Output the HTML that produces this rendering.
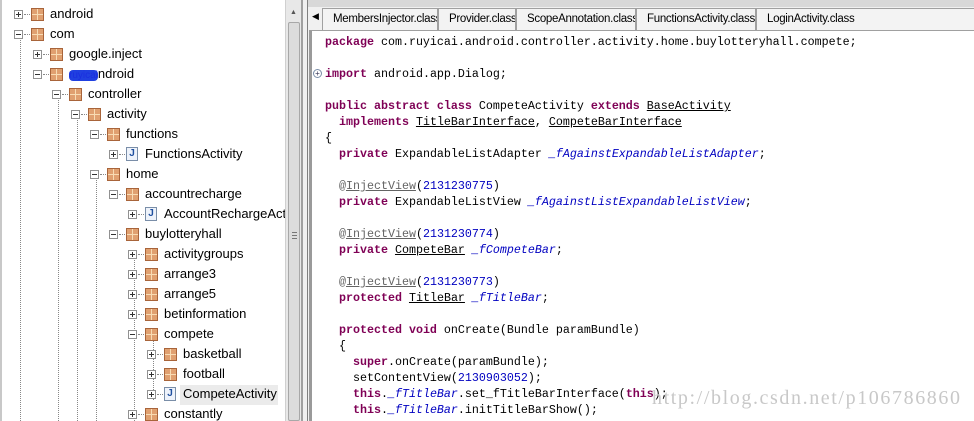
<!DOCTYPE html>
<html><head><meta charset="utf-8"><style>
*{margin:0;padding:0;box-sizing:border-box}
body{width:974px;height:421px;overflow:hidden;background:#f0f0f0;position:relative;font-family:"Liberation Sans",sans-serif}
#tree{position:absolute;left:0;top:0;width:285px;height:421px;background:#fff;border-left:2px solid #c8c8c8;overflow:hidden}
.r{position:absolute;height:20px;font-size:13px;line-height:20px;color:#000;white-space:nowrap}
.e{position:absolute;width:9px;height:9px;border:1px solid #919191;background:#fff}
.e:before{content:"";position:absolute;left:1px;top:3px;width:5px;height:1px;background:#333}
.e.p:after{content:"";position:absolute;left:3px;top:1px;width:1px;height:5px;background:#333}
.h{position:absolute;height:0;border-top:1px dotted #888;width:8px}
.v{position:absolute;width:0;border-left:1px dotted #888}
.k{position:absolute;width:13px;height:13px;background:#e0a070;border:1px solid #a8643a}
.k:before{content:"";position:absolute;left:5px;top:0;width:1px;height:11px;background:#f8dcb4}
.k:after{content:"";position:absolute;left:0;top:5px;width:11px;height:1px;background:#f8dcb4}
.j{position:absolute;width:12px;height:14px;background:#eef3fb;border:1px solid #7a8ea8;font:bold 10px "Liberation Sans",sans-serif;color:#2050a0;text-align:center;line-height:12px}
#sb{position:absolute;left:285px;top:0;width:16px;height:421px;background:#e8e8e8;border-left:1px solid #d0d0d0}
#thumb{position:absolute;left:2px;top:22px;width:12px;height:399px;background:#dcdcdc;border:1px solid #a8a8a8;border-radius:2px}
#div{position:absolute;left:301px;top:0;width:7px;height:421px;background:#f0f0f0;border-left:2px solid #a0a0a0;border-right:1px solid #808080}
#tabs{position:absolute;left:308px;top:0;width:666px;height:30px;background:#f0f0f0;border-top:7px solid #d8d8d8}
.t{position:absolute;top:1px;height:22px;border:1px solid #a0a0a0;border-bottom:none;background:#f3f3f3;font-size:11.5px;letter-spacing:-0.3px;line-height:20px;padding-left:10px;color:#000;white-space:nowrap;overflow:hidden}
#code{position:absolute;left:309px;top:30px;width:665px;height:391px;background:#fff;border-left:3px solid #9a9a9a;border-top:1px solid #a0a0a0}
pre{position:absolute;left:13px;top:3px;font-family:"Liberation Mono",monospace;font-size:11.67px;line-height:16px;color:#000}
.kw{color:#7f0055;font-weight:bold}
.f{color:#0000c0;font-style:italic}
.n{color:#0000c0}
.a{color:#646464}
.u{text-decoration:underline}
#wm{position:absolute;left:652px;top:387px;font-family:"Liberation Serif",serif;font-size:20px;color:#c8c8c8;letter-spacing:1.6px}
</style></head><body>
<div id="tree">
<div class="v" style="left:18px;top:40px;height:381px"></div>
<div class="v" style="left:56px;top:100px;height:321px"></div>
<div class="v" style="left:75px;top:120px;height:301px"></div>
<div class="v" style="left:94px;top:180px;height:241px"></div>
<div class="v" style="left:132px;top:260px;height:161px"></div>
<div class="v" style="left:151px;top:340px;height:60px"></div>

<div class="e p" style="left:12px;top:10px"></div><div class="h" style="left:22px;top:14px"></div><div class="k" style="left:29px;top:8px"></div><div class="r" style="left:48px;top:4px">android</div>
<div class="e" style="left:12px;top:30px"></div><div class="h" style="left:22px;top:34px"></div><div class="k" style="left:29px;top:28px"></div><div class="r" style="left:48px;top:24px">com</div>
<div class="e p" style="left:31px;top:50px"></div><div class="h" style="left:41px;top:54px"></div><div class="k" style="left:48px;top:48px"></div><div class="r" style="left:67px;top:44px">google.inject</div>
<div class="e" style="left:31px;top:70px"></div><div class="h" style="left:41px;top:74px"></div><div class="k" style="left:48px;top:68px"></div><div class="r" style="left:67px;top:64px"><span style="color:#1a2ee0;background:#2040e0;border-radius:4px;font-size:10px">ruyicai</span>ndroid</div>
<div class="e" style="left:50px;top:90px"></div><div class="h" style="left:60px;top:94px"></div><div class="k" style="left:67px;top:88px"></div><div class="r" style="left:86px;top:84px">controller</div>
<div class="e" style="left:69px;top:110px"></div><div class="h" style="left:79px;top:114px"></div><div class="k" style="left:86px;top:108px"></div><div class="r" style="left:105px;top:104px">activity</div>
<div class="e" style="left:88px;top:130px"></div><div class="h" style="left:98px;top:134px"></div><div class="k" style="left:105px;top:128px"></div><div class="r" style="left:124px;top:124px">functions</div>
<div class="e p" style="left:107px;top:150px"></div><div class="h" style="left:117px;top:154px"></div><div class="j" style="left:124px;top:147px">J</div><div class="r" style="left:143px;top:144px">FunctionsActivity</div>
<div class="e" style="left:88px;top:170px"></div><div class="h" style="left:98px;top:174px"></div><div class="k" style="left:105px;top:168px"></div><div class="r" style="left:124px;top:164px">home</div>
<div class="e" style="left:107px;top:190px"></div><div class="h" style="left:117px;top:194px"></div><div class="k" style="left:124px;top:188px"></div><div class="r" style="left:143px;top:184px">accountrecharge</div>
<div class="e p" style="left:126px;top:210px"></div><div class="h" style="left:136px;top:214px"></div><div class="j" style="left:143px;top:207px">J</div><div class="r" style="left:162px;top:204px">AccountRechargeActi</div>
<div class="e" style="left:107px;top:230px"></div><div class="h" style="left:117px;top:234px"></div><div class="k" style="left:124px;top:228px"></div><div class="r" style="left:143px;top:224px">buylotteryhall</div>
<div class="e p" style="left:126px;top:250px"></div><div class="h" style="left:136px;top:254px"></div><div class="k" style="left:143px;top:248px"></div><div class="r" style="left:162px;top:244px">activitygroups</div>
<div class="e p" style="left:126px;top:270px"></div><div class="h" style="left:136px;top:274px"></div><div class="k" style="left:143px;top:268px"></div><div class="r" style="left:162px;top:264px">arrange3</div>
<div class="e p" style="left:126px;top:290px"></div><div class="h" style="left:136px;top:294px"></div><div class="k" style="left:143px;top:288px"></div><div class="r" style="left:162px;top:284px">arrange5</div>
<div class="e p" style="left:126px;top:310px"></div><div class="h" style="left:136px;top:314px"></div><div class="k" style="left:143px;top:308px"></div><div class="r" style="left:162px;top:304px">betinformation</div>
<div class="e" style="left:126px;top:330px"></div><div class="h" style="left:136px;top:334px"></div><div class="k" style="left:143px;top:328px"></div><div class="r" style="left:162px;top:324px">compete</div>
<div class="e p" style="left:145px;top:350px"></div><div class="h" style="left:155px;top:354px"></div><div class="k" style="left:162px;top:348px"></div><div class="r" style="left:181px;top:344px">basketball</div>
<div class="e p" style="left:145px;top:370px"></div><div class="h" style="left:155px;top:374px"></div><div class="k" style="left:162px;top:368px"></div><div class="r" style="left:181px;top:364px">football</div>
<div style="position:absolute;left:178px;top:385px;width:98px;height:20px;background:#ebebeb"></div>
<div class="e p" style="left:145px;top:390px"></div><div class="h" style="left:155px;top:394px"></div><div class="j" style="left:162px;top:387px">J</div><div class="r" style="left:181px;top:384px">CompeteActivity</div>
<div class="e p" style="left:126px;top:410px"></div><div class="h" style="left:136px;top:414px"></div><div class="k" style="left:143px;top:408px"></div><div class="r" style="left:162px;top:404px">constantly</div>
</div>
<div id="sb"><div style="position:absolute;left:4px;top:9px;font-size:7px;color:#555">▲</div><div id="thumb"><div style="position:absolute;left:3px;top:209px;width:5px;height:7px;border-top:1px solid #777;border-bottom:1px solid #777"><div style="margin-top:2px;border-top:1px solid #777"></div></div></div></div>
<div id="div"></div>
<div id="tabs">
<div style="position:absolute;left:4px;top:4px;font-size:9px;color:#000">◀</div>
<div class="t" style="left:14px;width:116px">MembersInjector.class</div>
<div class="t" style="left:130px;width:78px">Provider.class</div>
<div class="t" style="left:208px;width:120px">ScopeAnnotation.class</div>
<div class="t" style="left:328px;width:120px">FunctionsActivity.class</div>
<div class="t" style="left:448px;width:220px">LoginActivity.class</div>
</div>
<div id="code">
<div style="position:absolute;left:1px;top:38px;width:9px;height:9px;border:1px solid #7a8ea8;border-radius:50%;font-size:8px;line-height:7px;text-align:center;color:#335">+</div>
<pre><span class="kw">package</span> com.ruyicai.android.controller.activity.home.buylotteryhall.compete;

<span class="kw">import</span> android.app.Dialog;

<span class="kw">public abstract class</span> CompeteActivity <span class="kw">extends</span> <span class="u">BaseActivity</span>
  <span class="kw">implements</span> <span class="u">TitleBarInterface</span>, <span class="u">CompeteBarInterface</span>
{
  <span class="kw">private</span> ExpandableListAdapter <span class="f">_fAgainstExpandableListAdapter</span>;

  <span class="a">@<span class="u">InjectView</span></span>(<span class="n">2131230775</span>)
  <span class="kw">private</span> ExpandableListView <span class="f">_fAgainstListExpandableListView</span>;

  <span class="a">@<span class="u">InjectView</span></span>(<span class="n">2131230774</span>)
  <span class="kw">private</span> <span class="u">CompeteBar</span> <span class="f">_fCompeteBar</span>;

  <span class="a">@<span class="u">InjectView</span></span>(<span class="n">2131230773</span>)
  <span class="kw">protected</span> <span class="u">TitleBar</span> <span class="f">_fTitleBar</span>;

  <span class="kw">protected void</span> onCreate(Bundle paramBundle)
  {
    <span class="kw">super</span>.onCreate(paramBundle);
    setContentView(<span class="n">2130903052</span>);
    <span class="kw">this</span>.<span class="f">_fTitleBar</span>.set_fTitleBarInterface(<span class="kw">this</span>);
    <span class="kw">this</span>.<span class="f">_fTitleBar</span>.initTitleBarShow();</pre>
</div>
<div id="wm">http://blog.csdn.net/p106786860</div>
</body></html>
